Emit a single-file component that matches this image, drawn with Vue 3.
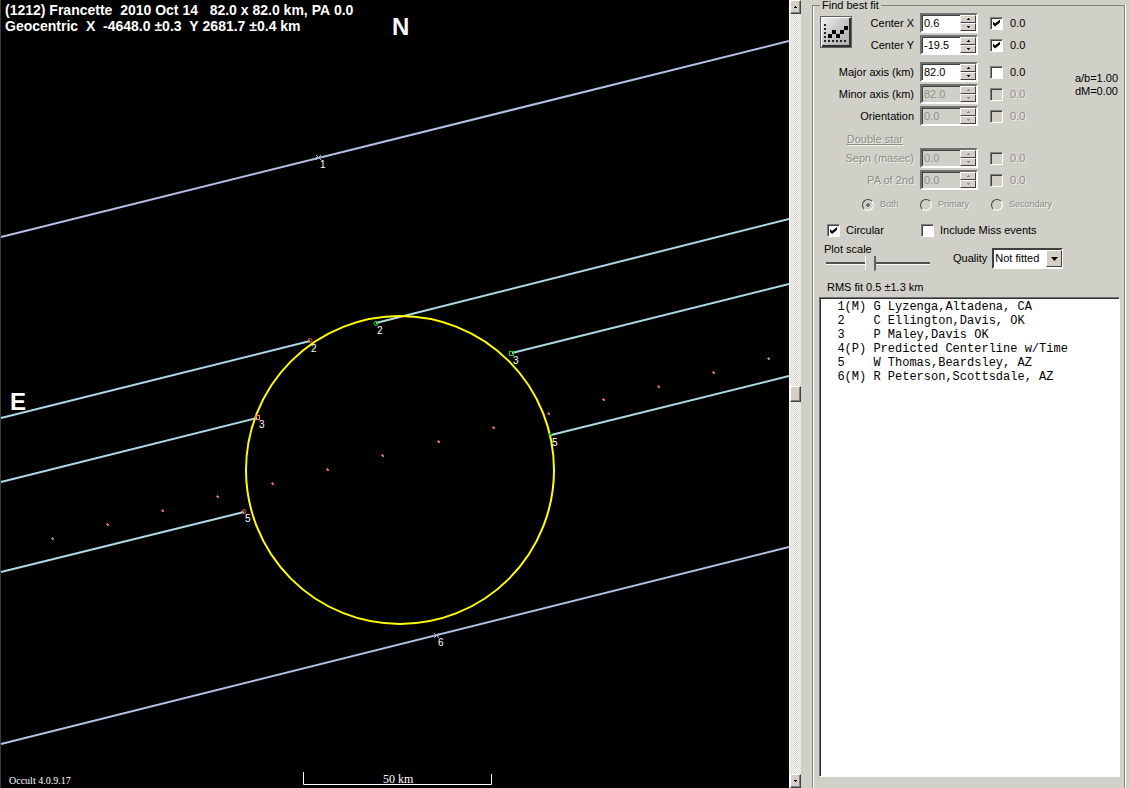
<script setup>
import { reactive, ref } from 'vue'

const keepSpaces = (s) => s.replace(/ /g, '\u00a0')

const titles = [
  '(1212) Francette  2010 Oct 14   82.0 x 82.0 km, PA 0.0',
  'Geocentric  X  -4648.0 ±0.3  Y 2681.7 ±0.4 km',
].map(keepSpaces)

const chords = [
  [1, 237, 789, 41, 'miss'],
  [1, 744, 789, 547, 'miss'],
  [1, 418, 310, 341, 'hit'],
  [376, 323, 789, 219, 'hit'],
  [1, 482, 257, 418, 'hit'],
  [512, 353, 789, 284, 'hit'],
  [1, 572, 244, 512, 'hit'],
  [551, 435, 789, 376, 'hit'],
]

const chordLabels = [
  ['1', 320, 168],
  ['2', 377, 334],
  ['2', 311, 352],
  ['3', 259, 428],
  ['3', 513, 364],
  ['5', 245, 522],
  ['5', 552, 446],
  ['6', 438, 646],
]

const dots = Array.from({ length: 14 }, (_, i) => ({
  x: 52 + Math.round(i * 55.08),
  y: 538 - Math.round(i * 13.86),
  end: i === 0 || i === 13,
}))

const fit = reactive([
  { id: 'cx', label: 'Center X', value: '0.6', checked: true, error: '0.0', disabled: false, off: false, row: 1 },
  { id: 'cy', label: 'Center Y', value: '-19.5', checked: true, error: '0.0', disabled: false, off: false, row: 2 },
  { id: 'major', label: 'Major axis (km)', value: '82.0', checked: false, error: '0.0', disabled: false, off: false, row: 4 },
  { id: 'minor', label: 'Minor axis (km)', value: '82.0', checked: false, error: '0.0', disabled: true, off: false, row: 5 },
  { id: 'orient', label: 'Orientation', value: '0.0', checked: false, error: '0.0', disabled: true, off: false, row: 6 },
  { id: 'sepn', label: 'Sepn (masec)', value: '0.0', checked: false, error: '0.0', disabled: true, off: true, row: 8 },
  { id: 'pa', label: 'PA of 2nd', value: '0.0', checked: false, error: '0.0', disabled: true, off: true, row: 9 },
])

const star = ref('Both')
const circular = ref(true)
const includeMiss = ref(false)
const scale = ref(42)
const selected = ref(null)
const observers = [
  '  1(M) G Lyzenga,Altadena, CA',
  '  2    C Ellington,Davis, OK',
  '  3    P Maley,Davis OK',
  '  4(P) Predicted Centerline w/Time',
  '  5    W Thomas,Beardsley, AZ',
  '  6(M) R Peterson,Scottsdale, AZ',
].map(keepSpaces)
</script>

<template>
  <main class="window">
    <section class="plot">
      <svg viewBox="0 0 789 788" preserveAspectRatio="xMinYMin meet" role="img" aria-label="Occultation chords">
        <line x1="0.5" y1="0" x2="0.5" y2="788" stroke="#3a3f3a" />
        <line
          v-for="(c, i) in chords"
          :key="i"
          :x1="c[0]" :y1="c[1]" :x2="c[2]" :y2="c[3]"
          :class="['chord', c[4]]"
        />
        <circle cx="400" cy="470" r="154" class="fit" />
        <g fill="none" stroke-width="1">
          <circle cx="376" cy="323.5" r="2" stroke="#00e000" />
          <circle cx="310" cy="340.5" r="2" stroke="#f06040" />
          <circle cx="244" cy="511.5" r="2" stroke="#f06040" />
          <path d="M549.500 433v3M549 434.500h3" stroke="#00e000" />
          <rect x="509.500" y="351.500" width="4" height="4" stroke="#00e000" />
          <rect x="255.500" y="415.500" width="4" height="4" stroke="#f08060" />
          <path d="M316 155l5 5M321 155l-5 5M316 157.500h5M434 633l5 5M439 633l-5 5M434 635.500h5" stroke="#b0b0d8" />
        </g>
        <g v-for="(d, i) in dots" :key="'d' + i" :fill="d.end ? '#a08088' : '#d85888'">
          <rect :x="d.x - 1" :y="d.y" width="3" height="1" />
          <rect :x="d.x" :y="d.y - 1" width="1" height="3" />
          <rect :x="d.x" :y="d.y" width="2" height="2" />
        </g>
        <g class="tag">
          <text v-for="(l, i) in chordLabels" :key="'l' + i" :x="l[1]" :y="l[2]">{{ l[0] }}</text>
        </g>
        <text v-for="(t, i) in titles" :key="'t' + i" class="title" x="5" :y="15 + i * 16">{{ t }}</text>
        <text class="compass" x="392" y="35">N</text>
        <text class="compass" x="10" y="410">E</text>
        <text class="version" x="9" y="784">Occult 4.0.9.17</text>
        <path d="M303.500 772v12.500H491.500V774" fill="none" stroke="#fff" />
        <text class="bar" x="383" y="783">50 km</text>
      </svg>
    </section>

    <div class="scroll">
      <button type="button" aria-label="Scroll up"><svg viewBox="0 0 5 3"><path d="M2 0h1v1h1v1H1V1h1z" /></svg></button>
      <div class="track"><div class="thumb"></div></div>
      <button type="button" aria-label="Scroll down"><svg viewBox="0 0 5 3"><path d="M1 0h3v1H3v1H2V1H1z" /></svg></button>
    </div>

    <aside class="side">
      <fieldset>
        <legend>Find best fit</legend>
        <div class="params">
          <button class="chart" type="button" aria-label="Fit">
            <svg viewBox="0 0 28 28" shape-rendering="crispEdges">
              <path d="M3 6h2v2H3zM3 10h2v2H3zM3 14h2v2H3zM3 18h2v2H3zM3 22h2v2H3zM7 22h2v2H7zM11 22h2v2h-2zM15 22h2v2h-2zM19 22h2v2h-2zM23 22h2v2h-2z" fill="#222" />
              <path d="M7 16h4v4H7zM11 12h4v4h-4zM15 16h4v4h-4zM19 12h4v4h-4zM23 8h4v4h-4z" fill="#000" />
            </svg>
          </button>
          <template v-for="p in fit" :key="p.id">
            <label :for="p.id" :class="['name', 'r' + p.row, { off: p.off }]">{{ p.label }}</label>
            <span :class="['spin', 'r' + p.row, { dis: p.disabled }]">
              <input :id="p.id" v-model="p.value" type="text" :disabled="p.disabled">
              <span class="steps">
                <button type="button" :disabled="p.disabled" :aria-label="p.label + ' up'"><svg viewBox="0 0 5 3"><path d="M2 0h1v1h1v1H1V1h1z" /></svg></button>
                <button type="button" :disabled="p.disabled" :aria-label="p.label + ' down'"><svg viewBox="0 0 5 3"><path d="M1 0h3v1H3v1H2V1H1z" /></svg></button>
              </span>
            </span>
            <label :class="['tick', 'r' + p.row, { off: p.disabled }]">
              <input v-model="p.checked" type="checkbox" :disabled="p.disabled">{{ p.error }}
            </label>
          </template>
          <span class="double off">Double star</span>
          <div class="ratio">a/b=1.00<br>dM=0.00</div>
        </div>

        <div class="radios">
          <label v-for="s in ['Both', 'Primary', 'Secondary']" :key="s" class="off">
            <input v-model="star" type="radio" name="star" :value="s" disabled>{{ s }}
          </label>
        </div>

        <div class="checks">
          <label><input v-model="circular" type="checkbox">Circular</label>
          <label><input v-model="includeMiss" type="checkbox">Include Miss events</label>
        </div>

        <div class="scale">
          <div class="slider">
            <label for="scale">Plot scale</label>
            <input id="scale" v-model="scale" type="range" min="0" max="100">
          </div>
          <label for="quality">Quality</label>
          <span class="combo">
            <select id="quality"><option>Not fitted</option></select>
            <span class="drop"><svg viewBox="0 0 7 4"><path d="M0 0h7L3.500 4z" /></svg></span>
          </span>
        </div>

        <div class="rms">RMS fit 0.5 ±1.3 km</div>
        <select v-model="selected" class="list" size="6" aria-label="Observers">
          <option v-for="o in observers" :key="o" :value="o">{{ o }}</option>
        </select>
      </fieldset>
    </aside>
  </main>
</template>

<style>
html, body { margin: 0; background: #d1d0c8; }
</style>

<style scoped>
* { box-sizing: border-box; }
.window {
  display: grid;
  grid-template-columns: minmax(0, 1fr) 12px 328px;
  height: 100vh;
  min-height: 600px;
  overflow: hidden;
  background: #d1d0c8;
  color: #000;
  font: 11px/13px "Liberation Sans", Arial, sans-serif;
}
button, input, select { font: inherit; color: inherit; margin: 0; padding: 0; border-radius: 0; }

.plot { background: #000; overflow: hidden; }
.plot svg { display: block; width: 100%; height: 100%; }
.chord { stroke-width: 2; }
.hit { stroke: #add8e6; }
.miss { stroke: #b4c0e4; }
.fit { fill: none; stroke: #ff0; stroke-width: 2; }
.plot text { fill: #fff; }
.tag { font-size: 10px; }
.title { font-size: 14px; font-weight: bold; }
.compass { font-size: 24px; font-weight: bold; }
.version { font: 10px "Liberation Serif", "Times New Roman", serif; }
.bar { font: 12px "Liberation Serif", "Times New Roman", serif; }

.scroll {
  display: flex;
  flex-direction: column;
  border-left: 1px solid #fff;
  background: repeating-conic-gradient(#fff 0 25%, #d4d0c8 0 50%) 0 0 / 2px 2px;
}
.scroll button, .thumb {
  height: 14px;
  background: #d4d0c8;
  border: 1px solid;
  border-color: #fff #404040 #404040 #fff;
  box-shadow: inset -1px -1px #808080;
}
.scroll button { display: flex; align-items: center; justify-content: center; }
.scroll svg { width: 5px; height: 3px; }
.track { flex: 1; display: flex; flex-direction: column; justify-content: center; }
.thumb { height: 16px; }

.side { display: flex; min-width: 0; padding: 0 4px 0 11px; }
fieldset {
  flex: 1;
  min-width: 0;
  margin: 0;
  padding: 0 4px 11px 6px;
  display: flex;
  flex-direction: column;
  border: solid #808080;
  border-width: 1px 1px 0;
  box-shadow: 1px 0 #fff, inset 1px 0 #fff;
}
legend { padding: 0 2px; margin-left: 1px; line-height: 11px; height: 11px; }

.params {
  display: grid;
  grid-template-columns: 94px 58px 1fr auto;
  grid-template-rows: 22px 22px 5px 22px 22px 22px 20px 22px 22px;
  column-gap: 6px;
  align-items: center;
  padding: 1px 2px 0 1px;
}
.r1 { grid-row: 1; } .r2 { grid-row: 2; } .r4 { grid-row: 4; } .r5 { grid-row: 5; }
.r6 { grid-row: 6; } .r8 { grid-row: 8; } .r9 { grid-row: 9; }
.chart {
  grid-area: 1 / 1 / 3 / 2;
  align-self: start;
  margin-top: 4px;
  width: 32px;
  height: 32px;
  background: linear-gradient(135deg, #f4f4f4, #c8c8c8 45%, #a8a8a8);
  border: 1px solid #606060;
  box-shadow: inset 1px 1px #fff, inset -2px -2px #303030;
}
.chart svg { display: block; width: 28px; height: 28px; }
.name { grid-column: 1; justify-self: end; }
.spin {
  grid-column: 2;
  display: flex;
  height: 20px;
  background: #fff;
  border: 2px solid;
  border-color: #707070 #fff #fff #707070;
  box-shadow: inset 1px 1px #404040;
}
.spin.dis { background: #d1d0c8; color: #909090; }
.spin input { flex: 1; min-width: 0; border: 0; background: none; padding: 0 0 0 2px; outline: 0; }
.steps { display: flex; flex-direction: column; width: 16px; }
.steps button {
  flex: 1;
  min-height: 0;
  display: flex;
  align-items: center;
  justify-content: center;
  background: #d4d0c8;
  border: 1px solid;
  border-color: #fff #404040 #404040 #fff;
}
.steps svg { width: 5px; height: 3px; }
.dis svg { fill: #888; }
.tick { grid-column: 3; display: flex; align-items: center; gap: 7px; padding-left: 6px; }
.off { color: #8c8c88; text-shadow: 1px 1px #f0f0ea; }
.double { grid-area: 7 / 1; justify-self: end; text-decoration: underline; padding: 4px 11px 0 0; white-space: nowrap; }
.ratio { grid-area: 4 / 4 / 6 / 5; padding-top: 4px; text-align: right; }

input[type="checkbox"] {
  appearance: none;
  width: 13px;
  height: 13px;
  flex: none;
  display: grid;
  place-items: center;
  background: #fff;
  border: 1px solid;
  border-color: #808080 #fff #fff #808080;
  box-shadow: inset 1px 1px #404040;
}
input[type="checkbox"]:disabled { background: #d1d0c8; }
input[type="checkbox"]:checked::after {
  content: "";
  width: 7px;
  height: 7px;
  background: #000;
  clip-path: polygon(0 29%, 29% 57%, 100% 0, 100% 43%, 29% 100%, 0 71%);
}
.radios {
  display: grid;
  grid-template-columns: 58px 71px 1fr;
  padding: 7px 0 0 43px;
  font-size: 9px;
}
.radios label, .checks label { display: flex; align-items: center; gap: 6px; white-space: nowrap; }
input[type="radio"] {
  appearance: none;
  flex: none;
  width: 12px;
  height: 12px;
  border: 1px solid;
  border-color: #404040 #fff #fff #404040;
  border-radius: 50%;
}
input[type="radio"]:checked { background: radial-gradient(circle, #707070 0 2px, transparent 2px); }
.checks { display: grid; grid-template-columns: 94px 1fr; padding: 12px 0 0 8px; }
.checks label { height: 15px; }
.scale { display: flex; align-items: center; padding: 5px 0 0 5px; }
.slider { display: flex; flex-direction: column; width: 106px; margin-right: 23px; }
.slider input {
  appearance: none;
  width: 104px;
  height: 18px;
  margin-left: 2px;
  background: linear-gradient(#505050 0 2px, #fff 2px 3px) 0 6px / 100% 3px no-repeat;
}
.slider input::-webkit-slider-thumb {
  appearance: none;
  width: 11px;
  height: 18px;
  background: linear-gradient(90deg, #fff 0 1px, #d1d0c8 1px 9px, #606060 9px);
  clip-path: polygon(0 0, 100% 0, 100% 75%, 60% 100%, 40% 100%, 0 75%);
}
.combo { display: grid; width: 71px; height: 21px; margin-left: 5px; }
.combo select {
  grid-area: 1 / 1;
  appearance: none;
  background: #fff;
  border: 2px solid;
  border-color: #404040 #fff #fff #404040;
  padding-left: 1px;
}
.drop {
  grid-area: 1 / 1;
  justify-self: end;
  display: grid;
  place-items: center;
  width: 16px;
  margin: 2px 1px 2px 0;
  background: #d4d0c8;
  border: 1px solid;
  border-color: #fff #404040 #404040 #fff;
  pointer-events: none;
}
.drop svg { width: 7px; height: 4px; }
.rms { padding: 7px 0 3px 8px; }
.list {
  flex: 1;
  min-height: 100px;
  appearance: none;
  overflow: hidden;
  background: #fff;
  border: 1px solid;
  border-color: #707070 #fff #fff #707070;
  box-shadow: inset 1px 1px #303030;
  padding: 2px 0 0 3px;
  outline: 0;
  font: 12px/14px "Liberation Mono", "Courier New", monospace;
}
.list option { padding: 0; min-height: 14px; line-height: 14px; }
</style>
